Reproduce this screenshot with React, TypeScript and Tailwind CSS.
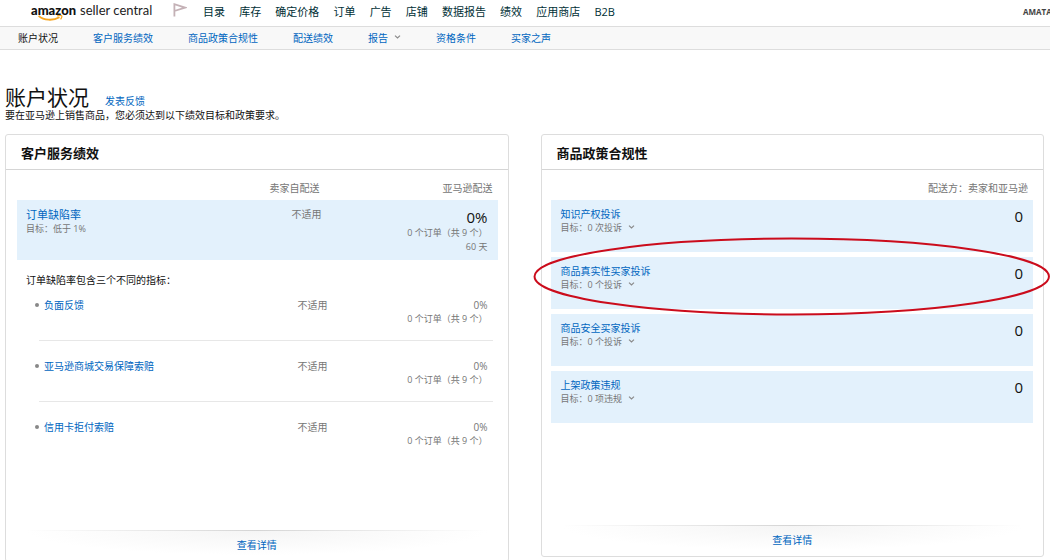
import React from "react";

const navItems = ["目录", "库存", "确定价格", "订单", "广告", "店铺", "数据报告", "绩效", "应用商店", "B2B"];

const subNavItems = [
  { label: "账户状况", active: true },
  { label: "客户服务绩效" },
  { label: "商品政策合规性" },
  { label: "配送绩效" },
  { label: "报告", menu: true },
  { label: "资格条件" },
  { label: "买家之声" },
];

const defectMetrics = ["负面反馈", "亚马逊商城交易保障索赔", "信用卡拒付索赔"];

const policies = [
  { name: "知识产权投诉", goal: "目标：0 次投诉", count: 0 },
  { name: "商品真实性买家投诉", goal: "目标：0 个投诉", count: 0, circled: true },
  { name: "商品安全买家投诉", goal: "目标：0 个投诉", count: 0 },
  { name: "上架政策违规", goal: "目标：0 项违规", count: 0 },
];

const Chevron: React.FC = () => (
  <svg className="w-[7px] h-1 mb-0.5" viewBox="0 0 7 4" fill="none" stroke="#8a8a8a" strokeWidth={1.2}>
    <path d="M1 0.6L3.5 3L6 0.6" />
  </svg>
);

const Logo: React.FC = () => (
  <a href="#" className="relative flex items-baseline gap-1 font-['Lato',sans-serif] text-[13px] leading-4 text-[#222] whitespace-nowrap">
    <span className="font-black text-[#111]">amazon</span>
    <span>seller central</span>
    <svg className="absolute left-[7px] top-[13px] w-[25px] h-[6px]" viewBox="0 0 25 6" fill="none" stroke="#f7a51f">
      <path d="M0.6 0.8C6 5.6 15 6 21.5 2.2" strokeWidth={1.8} />
      <path d="M19 0.9C21 0.4 23.4 0.4 23.8 1C24.1 1.7 23.4 3.2 22.6 4.4" strokeWidth={1.2} />
    </svg>
  </a>
);

const Card: React.FC<{ title: string; children: React.ReactNode }> = ({ title, children }) => (
  <section className="border border-[#ddd] rounded-[3px] bg-white">
    <h2 className="px-[15px] pt-2.5 pb-2 text-[13px] leading-4 font-bold text-[#111] border-b border-[#d5d5d5]">{title}</h2>
    {children}
  </section>
);

const CardFooter: React.FC = () => (
  <footer className="mx-5">
    <div className="h-px bg-linear-to-r from-transparent via-[#d5d5d5] to-transparent" />
    <div className="h-[30px] pb-0.5 flex items-center justify-center bg-[radial-gradient(ellipse_50%_80%_at_50%_0%,#f5f5f5,transparent)]">
      <a href="#" className="text-[#0066c0]">查看详情</a>
    </div>
  </footer>
);

const App: React.FC = () => {
  return (
    <div className="min-h-screen bg-white overflow-x-clip font-['Open_Sans','Noto_Sans_CJK_SC',sans-serif] text-[10px] leading-[14px] text-[#111]">
      {/* Top bar */}
      <header className="flex items-start h-[26px] pl-[31px] overflow-hidden">
        <div className="w-[142px] pt-0.5">
          <Logo />
        </div>
        <svg className="w-[14px] h-[14px] mt-[3px] mr-4" viewBox="0 0 14 14" fill="none" stroke="#c4b1b6" strokeWidth={1.8}>
          <path d="M1.4 13.5V1.2L12 4.6L1.4 8" />
        </svg>
        <nav className="flex justify-between w-[412px] pt-1 text-[11px] leading-4 text-[#002f36] whitespace-nowrap">
          {navItems.map((item) => (
            <a key={item} href="#">{item}</a>
          ))}
        </nav>
        <div className="ml-auto w-[27px] pt-1 text-[8px] leading-4 font-bold text-[#444] whitespace-nowrap">AMATA</div>
      </header>

      {/* Section links */}
      <nav className="flex items-center gap-[35px] h-6 pl-[18px] bg-[#f8f8f8] border-y border-[#ddd] whitespace-nowrap">
        {subNavItems.map((item) => (
          <a key={item.label} href="#" className={item.active ? "text-[#111]" : "flex items-center gap-1.5 text-[#0066c0]"}>
            {item.label}
            {item.menu && <Chevron />}
          </a>
        ))}
      </nav>

      <main className="pl-[5px] pr-1.5 pt-[35px]">
        <div className="flex items-baseline gap-4">
          <h1 className="text-[21px] leading-6">账户状况</h1>
          <a href="#" className="text-[#0066c0]">发表反馈</a>
        </div>
        <p className="leading-3">要在亚马逊上销售商品，您必须达到以下绩效目标和政策要求。</p>

        <div className="grid grid-cols-2 items-start gap-8 mt-[13px]">
          <Card title="客户服务绩效">
            <div className="pl-[11px] pr-2.5 pb-[82px]">
              <table className="w-full text-[#767676]">
                <thead>
                  <tr className="text-right leading-4">
                    <td />
                    <th scope="col" className="pt-2.5 pb-1 pr-2 font-normal">卖家自配送</th>
                    <th scope="col" className="w-[170px] pt-2.5 pb-1 pr-[5px] font-normal">亚马逊配送</th>
                  </tr>
                </thead>
                <tbody>
                  <tr className="bg-[#e3f1fc] align-top">
                    <th scope="row" className="pt-2 pl-[9px] text-left font-normal">
                      <a href="#" className="block text-[11px] text-[#0066c0]">订单缺陷率</a>
                      <span className="block text-[9px]">目标：低于 1%</span>
                    </th>
                    <td className="pt-[7px] pr-1.5 text-right">不适用</td>
                    <td className="pt-2 pb-1.5 pr-2.5 text-right text-[9px]">
                      <div className="text-[15px] leading-[18px] text-[#111]">0%</div>
                      <div>0 个订单（共 9 个）</div>
                      <div>60 天</div>
                    </td>
                  </tr>
                  <tr>
                    <td colSpan={3} className="pt-3 pb-2.5 pl-[9px] leading-4 text-[#111]">订单缺陷率包含三个不同的指标：</td>
                  </tr>
                  {defectMetrics.map((name, i) => (
                    <React.Fragment key={name}>
                      {i > 0 && (
                        <tr>
                          <td colSpan={3} className="pt-3.5 pb-[18px] pl-[22px] pr-[5px]">
                            <div className="h-px bg-[#e7e7e7]" />
                          </td>
                        </tr>
                      )}
                      <tr className="align-top">
                        <th scope="row" className="pl-[18px] text-left font-normal">
                          <div className="flex items-center gap-[5px]">
                            <span className="w-1 h-1 rounded-full bg-[#888]" />
                            <a href="#" className="text-[#0066c0]">{name}</a>
                          </div>
                        </th>
                        <td className="text-right">不适用</td>
                        <td className="pr-2.5 text-right">
                          <div>0%</div>
                          <div className="text-[9px]">0 个订单（共 9 个）</div>
                        </td>
                      </tr>
                    </React.Fragment>
                  ))}
                </tbody>
              </table>
            </div>
            <CardFooter />
          </Card>

          <Card title="商品政策合规性">
            <div className="pl-[9px] pr-2.5 pb-[102px] text-[#767676]">
              <p className="pt-2.5 pb-1 pr-[5px] text-right leading-4">配送方：卖家和亚马逊</p>
              <ul className="flex flex-col gap-[5px]">
                {policies.map((policy) => (
                  <li key={policy.name} className="relative flex justify-between items-start h-[52px] px-2.5 pt-[7px] bg-[#e3f1fc]">
                    <div>
                      <a href="#" className="block text-[#0066c0]">{policy.name}</a>
                      <button type="button" className="flex items-center gap-1.5 text-[9px]">
                        {policy.goal}
                        <Chevron />
                      </button>
                    </div>
                    <span className="text-[15px] leading-[18px] text-[#111]">{policy.count}</span>
                    {policy.circled && (
                      <svg className="absolute -left-[18px] -top-5 z-10 w-[calc(100%+35px)] max-w-none h-[79px] pointer-events-none" fill="none" stroke="#cb0c1c" strokeWidth={2}>
                        <ellipse cx="50%" cy="50%" rx="49.7%" ry="48%" />
                      </svg>
                    )}
                  </li>
                ))}
              </ul>
            </div>
            <CardFooter />
          </Card>
        </div>
      </main>
    </div>
  );
};

export default App;
